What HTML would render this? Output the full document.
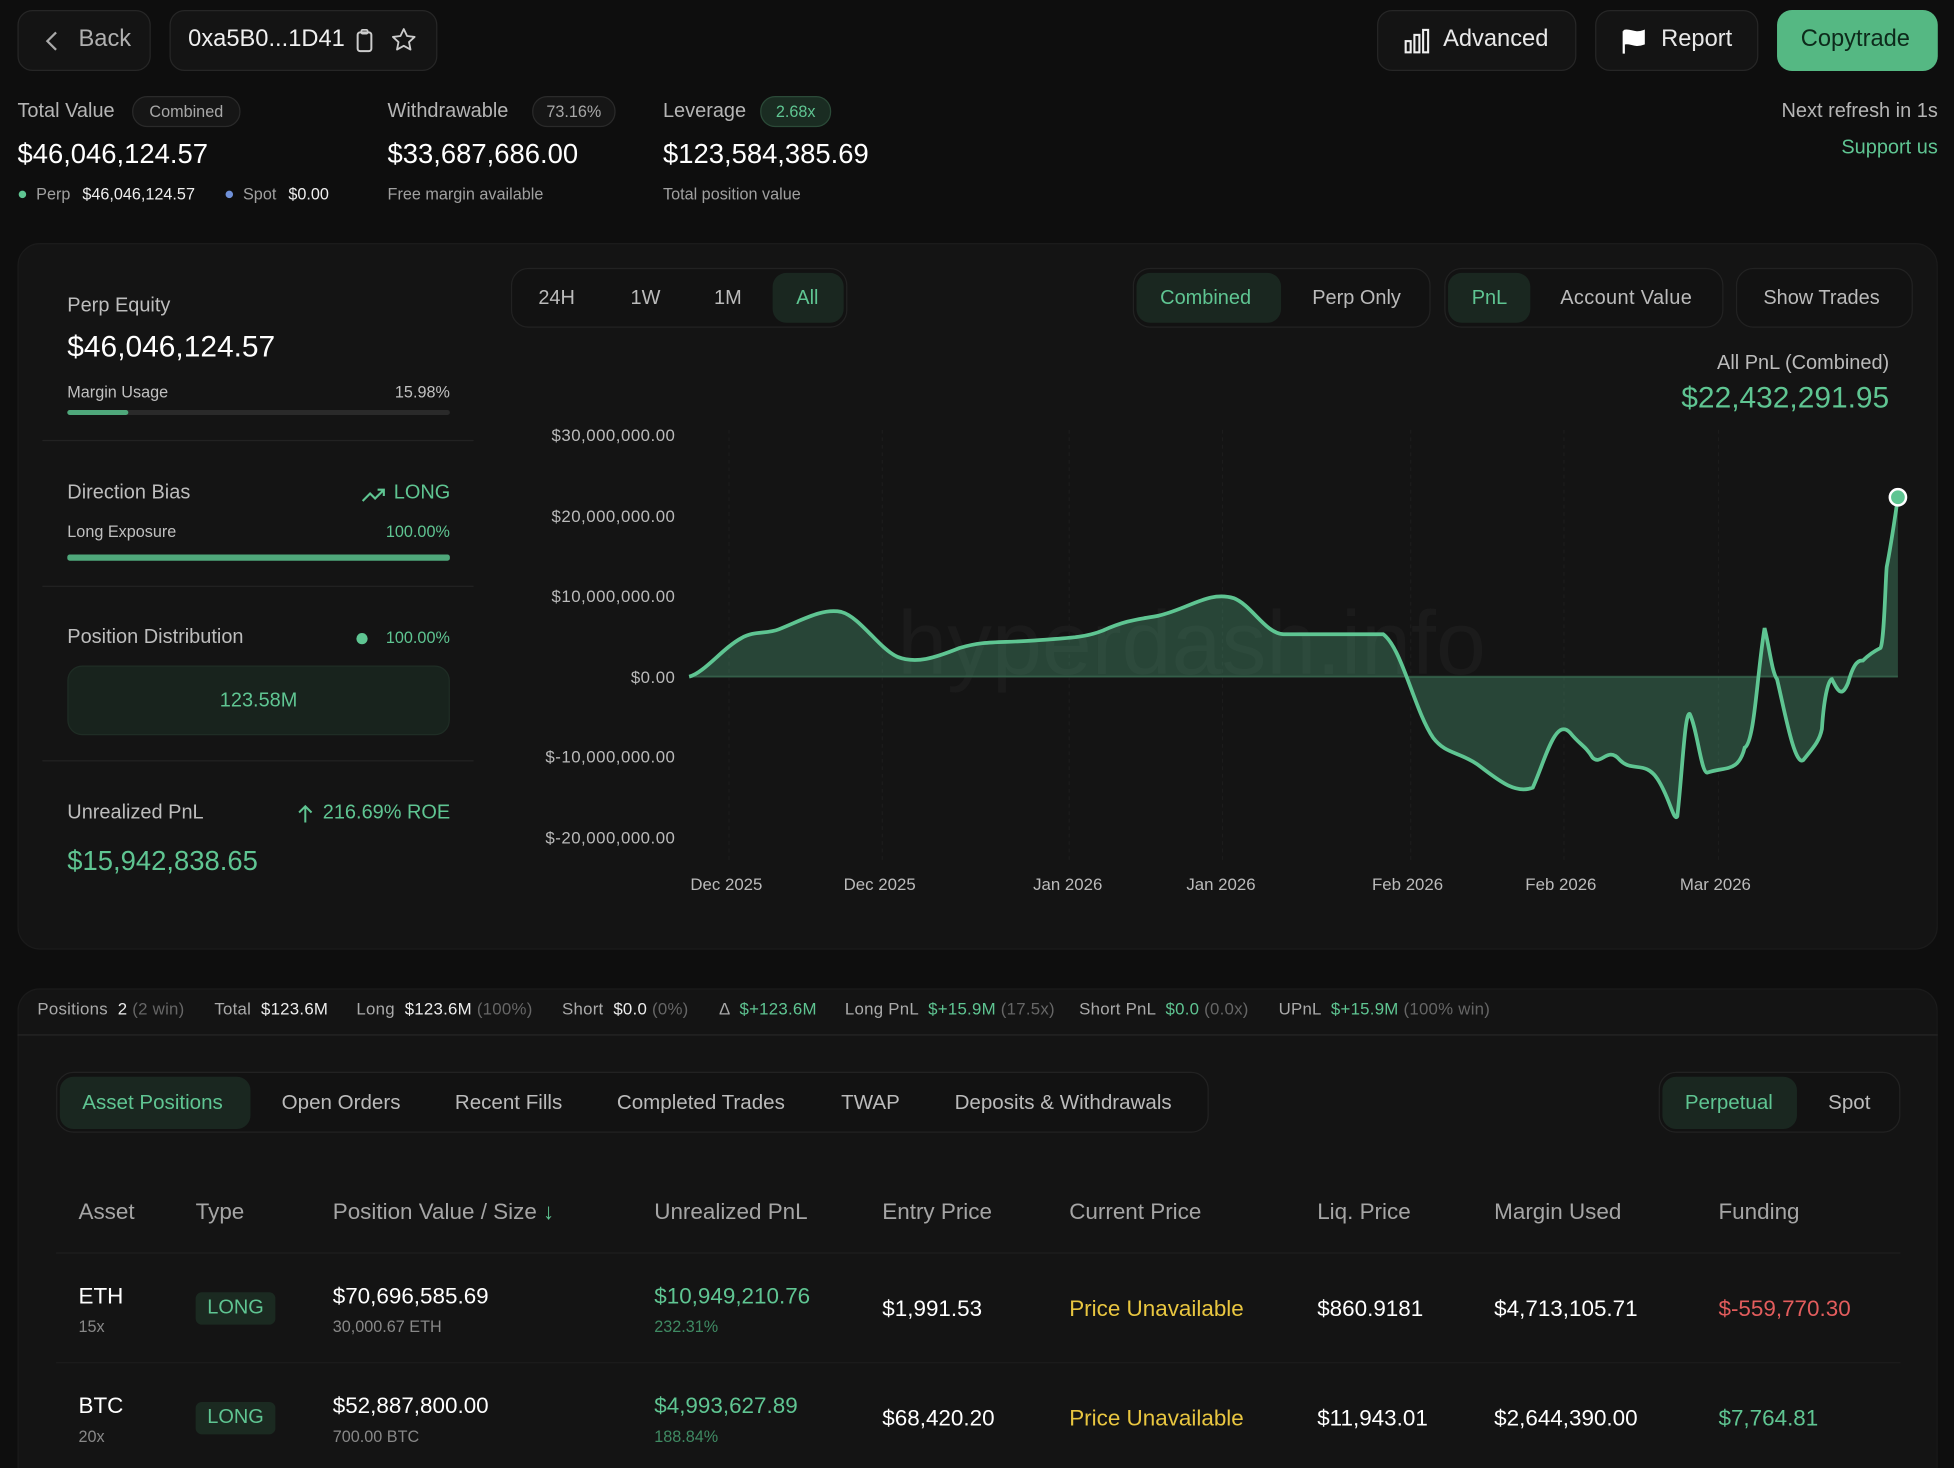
<!DOCTYPE html>
<html><head><meta charset="utf-8"><style>
*{box-sizing:border-box;margin:0;padding:0}
html,body{width:1954px;height:1468px;overflow:hidden;background:#0e0e0e}
#w{position:absolute;left:0;top:0;width:1568px;height:1178px;overflow:hidden;transform:scale(1.24617);transform-origin:0 0;font-family:"Liberation Sans",sans-serif;color:#e8e8e8}
.a{position:absolute;white-space:nowrap}
.btn{position:absolute;border:1px solid #262626;background:#141414;border-radius:12px}
.g{color:#5fc592}
.mu{color:#a0a0a0}
.pill{position:absolute;border:1px solid #222;background:#121212;border-radius:14px}
.act{position:absolute;background:#1a2720;border-radius:11px}
.bar{position:absolute;height:4px;background:#2a2a2a;border-radius:2px}
.hr{position:absolute;height:1px;background:#222}
.d{color:#666}
</style></head><body><div id="w">

<div class="btn" style="left:14px;top:8px;width:107px;height:49px"></div>
<svg class="a" style="left:34px;top:24px" width="16" height="18" viewBox="0 0 16 18"><path d="M11 2 L4 9 L11 16" stroke="#aaa" stroke-width="1.8" fill="none"/></svg>
<div class="a mu" style="left:63px;top:21px;font-size:19px;color:#b0b0b0">Back</div>
<div class="btn" style="left:136px;top:8px;width:215px;height:49px"></div>
<div class="a" style="left:151px;top:21px;font-size:19px;color:#f0f0f0">0xa5B0...1D41</div>
<svg class="a" style="left:284px;top:22px" width="18" height="22" viewBox="0 0 18 22"><rect x="3" y="4" width="11" height="15" rx="2" stroke="#ccc" stroke-width="1.6" fill="none"/><rect x="6" y="2" width="5" height="3" rx="1" stroke="#ccc" stroke-width="1.4" fill="none"/></svg>
<svg class="a" style="left:313px;top:21px" width="22" height="22" viewBox="0 0 24 24"><path d="M12 2.5l2.9 6.1 6.6.8-4.9 4.5 1.3 6.6L12 17.2 6.1 20.5l1.3-6.6L2.5 9.4l6.6-.8z" stroke="#ccc" stroke-width="1.6" fill="none" stroke-linejoin="round"/></svg>

<div class="btn" style="left:1105px;top:8px;width:160px;height:49px"></div>
<svg class="a" style="left:1126px;top:22px" width="22" height="22" viewBox="0 0 22 22"><rect x="2" y="11" width="4" height="9" stroke="#eee" stroke-width="1.7" fill="none"/><rect x="9" y="6" width="4" height="14" stroke="#eee" stroke-width="1.7" fill="none"/><rect x="16" y="2" width="4" height="18" stroke="#eee" stroke-width="1.7" fill="none"/></svg>
<div class="a" style="left:1158px;top:21px;font-size:19px">Advanced</div>
<div class="btn" style="left:1280px;top:8px;width:131px;height:49px"></div>
<svg class="a" style="left:1300px;top:22px" width="22" height="22" viewBox="0 0 22 22"><path d="M3 21V3 M3 3 C8 1 11 6 19 3 V13 C11 16 8 11 3 13" stroke="#fff" stroke-width="1.8" fill="#fff"/></svg>
<div class="a" style="left:1333px;top:21px;font-size:19px">Report</div>
<div class="a" style="left:1426px;top:8px;width:129px;height:49px;background:#55b883;border-radius:12px"></div>
<div class="a" style="left:1445px;top:21px;font-size:19px;color:#0d2a1b">Copytrade</div>

<div class="a" style="left:14px;top:81px;font-size:16px;color:#b5b5b5">Total Value</div>
<div class="a" style="left:106px;top:77px;width:87px;height:25px;border:1px solid #2a2a2a;border-radius:12px;background:#161616;font-size:13px;color:#a8a8a8;text-align:center;line-height:23px">Combined</div>
<div class="a" style="left:14px;top:111px;font-size:22px;color:#fff">$46,046,124.57</div>
<div class="a" style="left:15px;top:153px;width:6px;height:6px;border-radius:3px;background:#5fc592"></div>
<div class="a mu" style="left:29px;top:148px;font-size:13px">Perp <span style="color:#eee;margin-left:6px">$46,046,124.57</span></div>
<div class="a" style="left:181px;top:153px;width:6px;height:6px;border-radius:3px;background:#6f90d8"></div>
<div class="a mu" style="left:195px;top:148px;font-size:13px">Spot <span style="color:#eee;margin-left:6px">$0.00</span></div>

<div class="a" style="left:311px;top:81px;font-size:16px;color:#b5b5b5">Withdrawable</div>
<div class="a" style="left:427px;top:77px;width:67px;height:25px;border:1px solid #2a2a2a;border-radius:12px;background:#161616;font-size:13px;color:#a8a8a8;text-align:center;line-height:23px">73.16%</div>
<div class="a" style="left:311px;top:111px;font-size:22px;color:#fff">$33,687,686.00</div>
<div class="a mu" style="left:311px;top:148px;font-size:13px">Free margin available</div>

<div class="a" style="left:532px;top:81px;font-size:16px;color:#b5b5b5">Leverage</div>
<div class="a g" style="left:610px;top:77px;width:57px;height:25px;border:1px solid #2b4a38;border-radius:12px;background:#1a2c22;font-size:13px;text-align:center;line-height:23px">2.68x</div>
<div class="a" style="left:532px;top:111px;font-size:22px;color:#fff">$123,584,385.69</div>
<div class="a mu" style="left:532px;top:148px;font-size:13px">Total position value</div>

<div class="a" style="right:13px;top:81px;font-size:16px;color:#b5b5b5">Next refresh in 1s</div>
<div class="a g" style="right:13px;top:110px;font-size:16px">Support us</div>

<!-- main card -->
<div class="a" style="left:14px;top:195px;width:1541px;height:567px;background:#141414;border-radius:18px;border:1px solid #1b1b1b"></div>
<div class="a" style="left:54px;top:237px;font-size:16px;color:#bdbdbd">Perp Equity</div>
<div class="a" style="left:54px;top:265px;font-size:24px;color:#fff">$46,046,124.57</div>
<div class="a" style="left:54px;top:307px;font-size:13px;color:#c0c0c0">Margin Usage</div>
<div class="a" style="right:1207px;top:307px;font-size:13px;color:#c0c0c0">15.98%</div>
<div class="bar" style="left:54px;top:329px;width:307px"></div>
<div class="bar" style="left:54px;top:329px;width:49px;background:#4fa87b"></div>
<div class="hr" style="left:34px;top:353px;width:346px"></div>

<div class="a" style="left:54px;top:387px;font-size:16px;color:#bdbdbd">Direction Bias</div>
<svg class="a" style="left:290px;top:389px" width="20" height="16" viewBox="0 0 20 16"><path d="M1 13 L7 7 L11 11 L18 4 M13 4 H18 V9" stroke="#5fc592" stroke-width="1.7" fill="none"/></svg>
<div class="a g" style="left:316px;top:387px;font-size:16px">LONG</div>
<div class="a" style="left:54px;top:419px;font-size:13px;color:#c0c0c0">Long Exposure</div>
<div class="a g" style="right:1207px;top:419px;font-size:13px">100.00%</div>
<div class="bar" style="left:54px;top:445px;width:307px;height:5px;background:#4fa87b"></div>
<div class="hr" style="left:34px;top:470px;width:346px"></div>

<div class="a" style="left:54px;top:503px;font-size:16px;color:#bdbdbd">Position Distribution</div>
<div class="a" style="left:286px;top:508px;width:9px;height:9px;border-radius:5px;background:#5fc592"></div>
<div class="a g" style="right:1207px;top:504px;font-size:13px">100.00%</div>
<div class="a" style="left:54px;top:534px;width:307px;height:56px;border-radius:12px;background:#18231d;border:1px solid #1f2d25"></div>
<div class="a g" style="left:54px;top:554px;width:307px;text-align:center;font-size:16px">123.58M</div>
<div class="hr" style="left:34px;top:610px;width:346px"></div>

<div class="a" style="left:54px;top:644px;font-size:16px;color:#bdbdbd">Unrealized PnL</div>
<svg class="a" style="left:238px;top:645px" width="14" height="16" viewBox="0 0 14 16"><path d="M7 15V2 M2 7 L7 2 L12 7" stroke="#5fc592" stroke-width="1.6" fill="none"/></svg>
<div class="a g" style="left:259px;top:644px;font-size:16px">216.69% ROE</div>
<div class="a g" style="left:54px;top:678px;font-size:22px">$15,942,838.65</div>

<!-- tabs -->
<div class="pill" style="left:410px;top:215px;width:270px;height:48px"></div>
<div class="act" style="left:620px;top:219px;width:57px;height:40px"></div>
<div class="a" style="left:432px;top:231px;font-size:16px;color:#bbb">24H</div>
<div class="a" style="left:506px;top:231px;font-size:16px;color:#bbb">1W</div>
<div class="a" style="left:573px;top:231px;font-size:16px;color:#bbb">1M</div>
<div class="a g" style="left:639px;top:231px;font-size:16px">All</div>

<div class="pill" style="left:909px;top:215px;width:239px;height:48px"></div>
<div class="act" style="left:912px;top:219px;width:116px;height:40px"></div>
<div class="a g" style="left:931px;top:231px;font-size:16px">Combined</div>
<div class="a" style="left:1053px;top:231px;font-size:16px;color:#bbb">Perp Only</div>
<div class="pill" style="left:1159px;top:215px;width:224px;height:48px"></div>
<div class="act" style="left:1162px;top:219px;width:66px;height:40px"></div>
<div class="a g" style="left:1181px;top:231px;font-size:16px">PnL</div>
<div class="a" style="left:1252px;top:231px;font-size:16px;color:#bbb;letter-spacing:0.3px">Account Value</div>
<div class="pill" style="left:1393px;top:215px;width:142px;height:48px"></div>
<div class="a" style="left:1415px;top:231px;font-size:16px;color:#bbb">Show Trades</div>

<div class="a" style="right:52px;top:283px;font-size:16px;color:#bbb">All PnL (Combined)</div>
<div class="a g" style="right:52px;top:306px;font-size:24px">$22,432,291.95</div>

<!-- chart -->
<div class="a" style="left:720px;top:476px;font-size:72px;color:#1b1b1b">hyperdash.info</div>
<div class="a" style="right:1026px;top:318px;font-size:13.5px;color:#bbb;text-align:right;line-height:64.5px;letter-spacing:0.4px">$30,000,000.00<br>$20,000,000.00<br>$10,000,000.00<br>$0.00<br>$-10,000,000.00<br>$-20,000,000.00</div>
<svg class="a" style="left:0;top:0" width="1568" height="760">
<g stroke="#1c1c1c" stroke-dasharray="3 3"><line x1="585" y1="345" x2="585" y2="690"/><line x1="708" y1="345" x2="708" y2="690"/><line x1="858" y1="345" x2="858" y2="690"/><line x1="981" y1="345" x2="981" y2="690"/><line x1="1132" y1="345" x2="1132" y2="690"/><line x1="1255" y1="345" x2="1255" y2="690"/><line x1="1379" y1="345" x2="1379" y2="690"/></g>
<line x1="553" y1="543" x2="1523" y2="543" stroke="#2c4a3a" stroke-width="1.5"/>
<path d="M553,543 C565,540 580,520 595,512 C605,506 615,509 625,505 C645,497 660,488 675,491 C690,495 705,520 720,527 C735,533 750,528 770,520 C790,514 800,516 830,514 C855,512 870,512 885,506 C905,497 915,497 930,494 C955,488 970,474 990,480 C1005,486 1015,508 1030,509 L1110,509 C1125,520 1135,570 1150,592 C1160,605 1170,603 1185,613 C1200,624 1215,638 1230,632 C1240,610 1248,575 1260,588 C1268,598 1272,598 1278,608 C1285,615 1290,598 1300,610 C1310,620 1320,610 1330,625 C1340,640 1343,660 1346,655 C1350,620 1352,570 1356,573 C1362,585 1365,620 1370,620 C1385,615 1395,620 1400,600 C1408,596 1410,540 1416,504 C1420,520 1422,540 1426,545 C1432,570 1440,615 1447,610 C1455,600 1460,595 1462,585 C1464,555 1468,545 1470,545 C1475,555 1478,560 1483,548 C1488,530 1492,530 1495,530 C1500,525 1505,522 1509,520 C1512,515 1513,465 1514,455 C1517,440 1520,420 1523,399" fill="none" stroke="#5fc592" stroke-width="3"/>
<path d="M553,543 C565,540 580,520 595,512 C605,506 615,509 625,505 C645,497 660,488 675,491 C690,495 705,520 720,527 C735,533 750,528 770,520 C790,514 800,516 830,514 C855,512 870,512 885,506 C905,497 915,497 930,494 C955,488 970,474 990,480 C1005,486 1015,508 1030,509 L1110,509 C1125,520 1135,570 1150,592 C1160,605 1170,603 1185,613 C1200,624 1215,638 1230,632 C1240,610 1248,575 1260,588 C1268,598 1272,598 1278,608 C1285,615 1290,598 1300,610 C1310,620 1320,610 1330,625 C1340,640 1343,660 1346,655 C1350,620 1352,570 1356,573 C1362,585 1365,620 1370,620 C1385,615 1395,620 1400,600 C1408,596 1410,540 1416,504 C1420,520 1422,540 1426,545 C1432,570 1440,615 1447,610 C1455,600 1460,595 1462,585 C1464,555 1468,545 1470,545 C1475,555 1478,560 1483,548 C1488,530 1492,530 1495,530 C1500,525 1505,522 1509,520 C1512,515 1513,465 1514,455 C1517,440 1520,420 1523,399 L1523,543 Z" fill="#5fc592" fill-opacity="0.28" stroke="none"/>
<circle cx="1523" cy="399" r="6.5" fill="#5fc592" stroke="#fff" stroke-width="2"/>
</svg>
<div class="a" style="top:702px;left:0;width:1568px;font-size:13.5px;color:#bbb">
<span class="a" style="left:554px">Dec 2025</span><span class="a" style="left:677px">Dec 2025</span><span class="a" style="left:829px">Jan 2026</span><span class="a" style="left:952px">Jan 2026</span><span class="a" style="left:1101px">Feb 2026</span><span class="a" style="left:1224px">Feb 2026</span><span class="a" style="left:1348px">Mar 2026</span></div>

<!-- bottom card -->
<div class="a" style="left:14px;top:793px;width:1541px;height:385px;background:#141414;border-radius:18px 18px 0 0;border:1px solid #1b1b1b;border-bottom:none"></div>
<div class="hr" style="left:14px;top:830px;width:1541px;background:#262626"></div>
<div class="a" style="top:802px;left:0;width:1568px;font-size:13.5px;color:#aaa;letter-spacing:0.2px">
<span class="a" style="left:30px">Positions <span style="color:#eee">&nbsp;2</span> <span class="d">(2 win)</span></span>
<span class="a" style="left:172px">Total <span style="color:#eee">&nbsp;$123.6M</span></span>
<span class="a" style="left:286px">Long <span style="color:#eee">&nbsp;$123.6M</span> <span class="d">(100%)</span></span>
<span class="a" style="left:451px">Short <span style="color:#eee">&nbsp;$0.0</span> <span class="d">(0%)</span></span>
<span class="a" style="left:577px">Δ <span class="g">&nbsp;$+123.6M</span></span>
<span class="a" style="left:678px">Long PnL <span class="g">&nbsp;$+15.9M</span> <span class="d">(17.5x)</span></span>
<span class="a" style="left:866px">Short PnL <span class="g">&nbsp;$0.0</span> <span class="d">(0.0x)</span></span>
<span class="a" style="left:1026px">UPnL <span class="g">&nbsp;$+15.9M</span> <span class="d">(100% win)</span></span>
</div>

<div class="pill" style="left:45px;top:860px;width:925px;height:49px"></div>
<div class="act" style="left:48px;top:864px;width:153px;height:42px"></div>
<div class="a g" style="left:66px;top:876px;font-size:16.5px">Asset Positions</div>
<div class="a" style="left:226px;top:876px;font-size:16.5px;color:#bbb">Open Orders</div>
<div class="a" style="left:365px;top:876px;font-size:16.5px;color:#bbb">Recent Fills</div>
<div class="a" style="left:495px;top:876px;font-size:16.5px;color:#bbb">Completed Trades</div>
<div class="a" style="left:675px;top:876px;font-size:16.5px;color:#bbb">TWAP</div>
<div class="a" style="left:766px;top:876px;font-size:16.5px;color:#bbb">Deposits &amp; Withdrawals</div>
<div class="pill" style="left:1331px;top:860px;width:194px;height:49px"></div>
<div class="act" style="left:1334px;top:864px;width:108px;height:42px"></div>
<div class="a g" style="left:1352px;top:876px;font-size:16.5px">Perpetual</div>
<div class="a" style="left:1467px;top:876px;font-size:16.5px;color:#bbb">Spot</div>

<div class="a" style="top:962px;left:0;width:1568px;font-size:18px;color:#a5a5a5">
<span class="a" style="left:63px">Asset</span><span class="a" style="left:157px">Type</span><span class="a" style="left:267px">Position Value / Size <span class="g">↓</span></span><span class="a" style="left:525px">Unrealized PnL</span><span class="a" style="left:708px">Entry Price</span><span class="a" style="left:858px">Current Price</span><span class="a" style="left:1057px">Liq. Price</span><span class="a" style="left:1199px">Margin Used</span><span class="a" style="left:1379px">Funding</span></div>
<div class="hr" style="left:45px;top:1005px;width:1480px;background:#1e1e1e"></div>

<div class="a" style="left:63px;top:1030px;font-size:18px;color:#fff">ETH</div>
<div class="a" style="left:63px;top:1057px;font-size:13px;color:#888">15x</div>
<div class="a g" style="left:157px;top:1037px;width:64px;height:26px;background:#1b2a21;border-radius:5px;text-align:center;line-height:26px;font-size:16px">LONG</div>
<div class="a" style="left:267px;top:1030px;font-size:18px;color:#fff">$70,696,585.69</div>
<div class="a" style="left:267px;top:1057px;font-size:13px;color:#888">30,000.67 ETH</div>
<div class="a g" style="left:525px;top:1030px;font-size:18px">$10,949,210.76</div>
<div class="a" style="left:525px;top:1057px;font-size:13px;color:#3f8a63">232.31%</div>
<div class="a" style="left:708px;top:1040px;font-size:18px;color:#fff">$1,991.53</div>
<div class="a" style="left:858px;top:1040px;font-size:18px;color:#e9c640">Price Unavailable</div>
<div class="a" style="left:1057px;top:1040px;font-size:18px;color:#fff">$860.9181</div>
<div class="a" style="left:1199px;top:1040px;font-size:18px;color:#fff">$4,713,105.71</div>
<div class="a" style="left:1379px;top:1040px;font-size:18px;color:#e35d5d">$-559,770.30</div>
<div class="hr" style="left:45px;top:1093px;width:1480px;background:#1c1c1c"></div>

<div class="a" style="left:63px;top:1118px;font-size:18px;color:#fff">BTC</div>
<div class="a" style="left:63px;top:1145px;font-size:13px;color:#888">20x</div>
<div class="a g" style="left:157px;top:1125px;width:64px;height:26px;background:#1b2a21;border-radius:5px;text-align:center;line-height:26px;font-size:16px">LONG</div>
<div class="a" style="left:267px;top:1118px;font-size:18px;color:#fff">$52,887,800.00</div>
<div class="a" style="left:267px;top:1145px;font-size:13px;color:#888">700.00 BTC</div>
<div class="a g" style="left:525px;top:1118px;font-size:18px">$4,993,627.89</div>
<div class="a" style="left:525px;top:1145px;font-size:13px;color:#3f8a63">188.84%</div>
<div class="a" style="left:708px;top:1128px;font-size:18px;color:#fff">$68,420.20</div>
<div class="a" style="left:858px;top:1128px;font-size:18px;color:#e9c640">Price Unavailable</div>
<div class="a" style="left:1057px;top:1128px;font-size:18px;color:#fff">$11,943.01</div>
<div class="a" style="left:1199px;top:1128px;font-size:18px;color:#fff">$2,644,390.00</div>
<div class="a g" style="left:1379px;top:1128px;font-size:18px">$7,764.81</div>

</div></body></html>
